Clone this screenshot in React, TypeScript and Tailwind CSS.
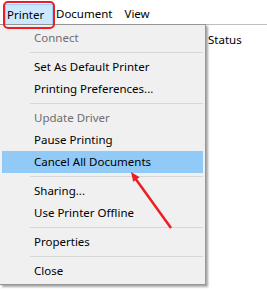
const menuFont = { fontFamily: '"Noto Sans", "Open Sans", sans-serif' };

type Entry = { label?: string; disabled?: boolean; active?: boolean; sep?: boolean };

const entries: Entry[] = [
    { label: 'Connect', disabled: true },
    { sep: true },
    { label: 'Set As Default Printer' },
    { label: 'Printing Preferences...' },
    { sep: true },
    { label: 'Update Driver', disabled: true },
    { label: 'Pause Printing' },
    { label: 'Cancel All Documents', active: true },
    { sep: true },
    { label: 'Sharing...' },
    { label: 'Use Printer Offline' },
    { sep: true },
    { label: 'Properties' },
    { sep: true },
    { label: 'Close' }
];

const MenuItem = ({ entry }: { entry: Entry }) => {
    if (entry.sep) {
        return (
            <div className="h-[7px] flex items-center ml-[30px] mr-[2px]">
                <div className="h-px w-full bg-[#d7d7d7]" />
            </div>
        );
    }
    return (
        <div
            className={
                entry.active
                    ? 'h-[22px] flex items-center pl-[32px] ml-[2px] mr-[2px] bg-[#91c9f7] text-black'
                    : entry.disabled
                        ? 'h-[22px] flex items-center pl-[32px] ml-[2px] mr-[2px] text-[#6d6d6d]'
                        : 'h-[22px] flex items-center pl-[32px] ml-[2px] mr-[2px] text-black'
            }
        >
            {entry.label}
        </div>
    );
};

export default function App() {
    return (
        <div className="relative w-[267px] h-[292px] bg-white overflow-hidden text-[11.5px] leading-none" style={menuFont}>
            {/* menu bar */}
            <div className="h-[24px] flex items-stretch pt-[4px] text-black">
                <div className="ml-[5px] w-[48px] flex items-center pl-[1px] bg-[#cce8ff] border border-[#99d1ff] border-b-0">
                    Printer
                </div>
                <div className="ml-[3px] flex items-center">Document</div>
                <div className="ml-[12px] flex items-center">View</div>
            </div>

            <div className="flex items-start">
                {/* dropdown */}
                <div className="w-[206px] bg-[#f0f0f0] border border-l-0 border-[#979797] py-[2px] shadow-[2px_2px_2px_rgba(0,0,0,0.35)] relative z-10">
                    {entries.map((entry, i) => (
                        <MenuItem key={i} entry={entry} />
                    ))}
                </div>

                {/* list view behind */}
                <div className="flex-1 border-t border-[#bdbdbd] pl-[2px] pt-[9px] text-black">
                    Status
                </div>
            </div>

            {/* annotations */}
            <div className="absolute left-[3px] top-[1px] w-[52px] h-[28px] border-2 border-[#ee1c24] rounded-[5px] z-20" />
            <svg className="absolute inset-0 z-20 pointer-events-none" width="267" height="292">
                <line x1="171" y1="228" x2="135" y2="178" stroke="#ee1c24" strokeWidth="2.5" />
                <polygon points="131,172 139.6,177.3 133.2,181.8" fill="#ee1c24" />
            </svg>
        </div>
    );
}
